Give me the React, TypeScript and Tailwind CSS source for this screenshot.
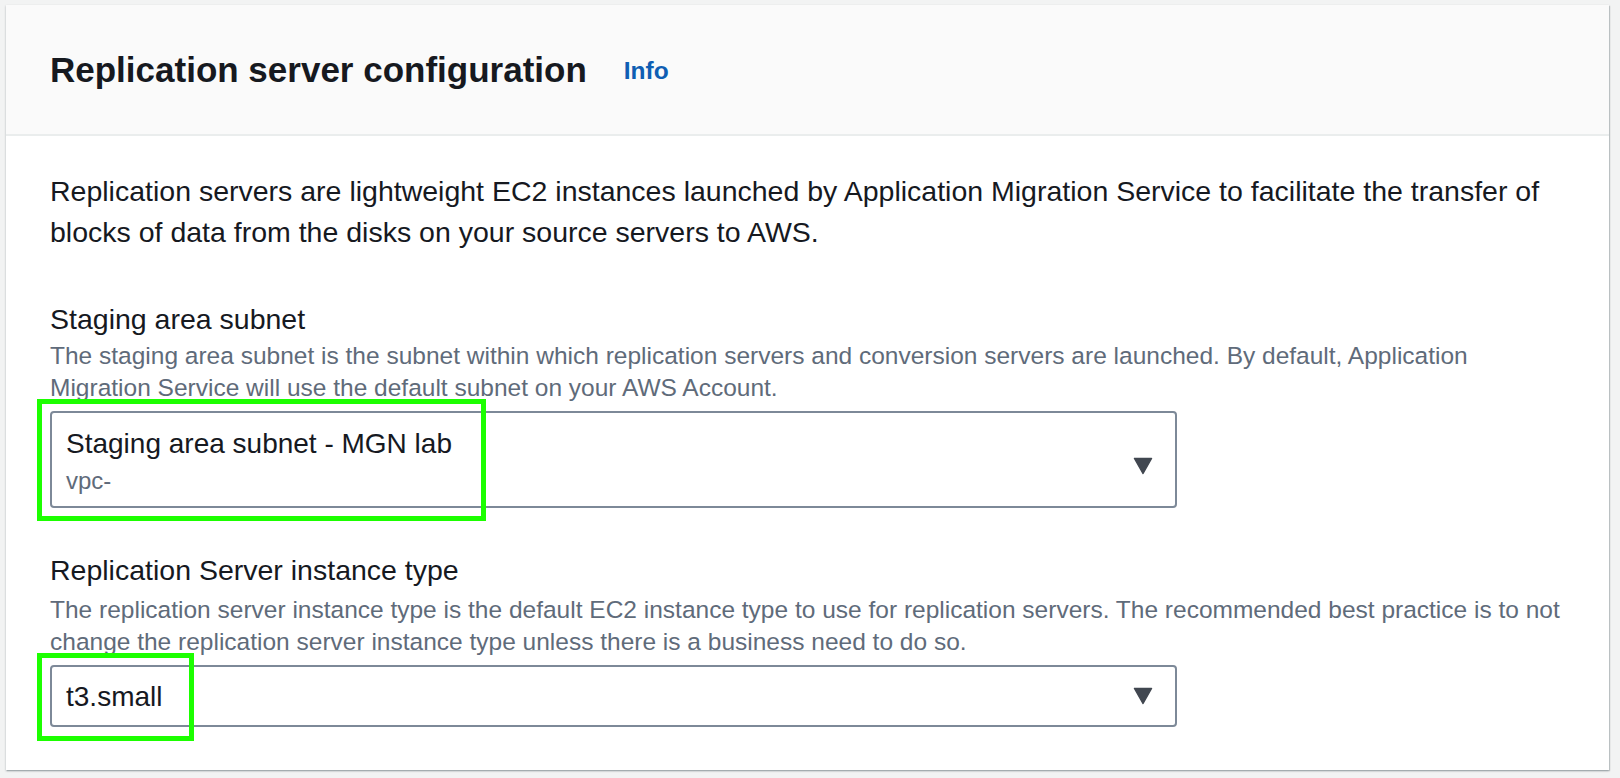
import React from 'react';

const font = { fontFamily: '"Liberation Sans", Arial, sans-serif' };

// Small down-pointing caret used by the AWS select
function Caret() {
  return (
    <svg width="20" height="18" viewBox="0 0 20 18" className="shrink-0 self-center">
      <path d="M1.5 1.5 L18.5 1.5 L10 16.5 Z" fill="#414750" stroke="#414750" strokeWidth="1.5" strokeLinejoin="round" />
    </svg>
  );
}

type FieldProps = {
  label: string;
  description: string;
  descClass: string;
  children: React.ReactNode;
};

function Field({ label, description, descClass, children }: FieldProps) {
  return (
    <div className="flex flex-col">
      <div className="text-[28.5px] leading-[41px] text-[#16191f]">{label}</div>
      <div className={`text-[24.5px] leading-[32px] text-[#5f6b7a] ${descClass}`}>{description}</div>
      <div className="mt-[7px]">{children}</div>
    </div>
  );
}

export default function App() {
  return (
    <div className="min-h-[778px] w-full bg-[#f2f3f3] pt-[5px] pl-[6px]" style={font}>
      <div className="w-[1603px] bg-white shadow-[0_1px_2px_rgba(0,28,36,0.3),1px_1px_1px_rgba(0,28,36,0.15)]">
        {/* Header */}
        <div className="h-[131px] bg-[#fafafa] border-b-[2px] border-[#eaeded] flex items-center pl-[44px] gap-[37px]">
          <h2 className="text-[35px] font-bold text-[#16191f] leading-none">Replication server configuration</h2>
          <a className="text-[24.5px] font-bold text-[#0f5eb3] leading-none mt-[4px]">Info</a>
        </div>

        {/* Body */}
        <div className="pl-[44px] pr-[42px] pt-[35px] pb-[43px] flex flex-col">
          <p className="text-[28.5px] leading-[41px] text-[#16191f]">
            Replication servers are lightweight EC2 instances launched by Application Migration Service to facilitate the transfer of blocks of data from the disks on your source servers to AWS.
          </p>

          <div className="mt-[46px]">
            <Field
              label="Staging area subnet"
              descClass="mt-0"
              description="The staging area subnet is the subnet within which replication servers and conversion servers are launched. By default, Application Migration Service will use the default subnet on your AWS Account."
            >
              <div className="relative w-[1127px] h-[97px] border-[2px] border-[#7d8998] rounded-[4px] flex items-start pt-[12px] pl-[14px] pr-[22px]">
                <div className="flex-1 flex flex-col">
                  <span className="text-[28px] leading-[37px] text-[#16191f]">Staging area subnet - MGN lab</span>
                  <span className="text-[24px] leading-[37px] text-[#5f6b7a]">vpc-</span>
                </div>
                <Caret />
                <div className="absolute left-[-15px] top-[-14px] w-[449px] h-[122px] border-[5px] border-[#1cff00] pointer-events-none" />
              </div>
            </Field>
          </div>

          <div className="mt-[42px]">
            <Field
              label="Replication Server instance type"
              descClass="mt-[3px]"
              description="The replication server instance type is the default EC2 instance type to use for replication servers. The recommended best practice is to not change the replication server instance type unless there is a business need to do so."
            >
              <div className="relative w-[1127px] h-[62px] border-[2px] border-[#7d8998] rounded-[4px] flex items-center pl-[14px] pr-[22px]">
                <span className="flex-1 text-[28px] leading-[37px] text-[#16191f]">t3.small</span>
                <Caret />
                <div className="absolute left-[-15px] top-[-14px] w-[157px] h-[88px] border-[5px] border-[#1cff00] pointer-events-none" />
              </div>
            </Field>
          </div>
        </div>
      </div>
    </div>
  );
}
